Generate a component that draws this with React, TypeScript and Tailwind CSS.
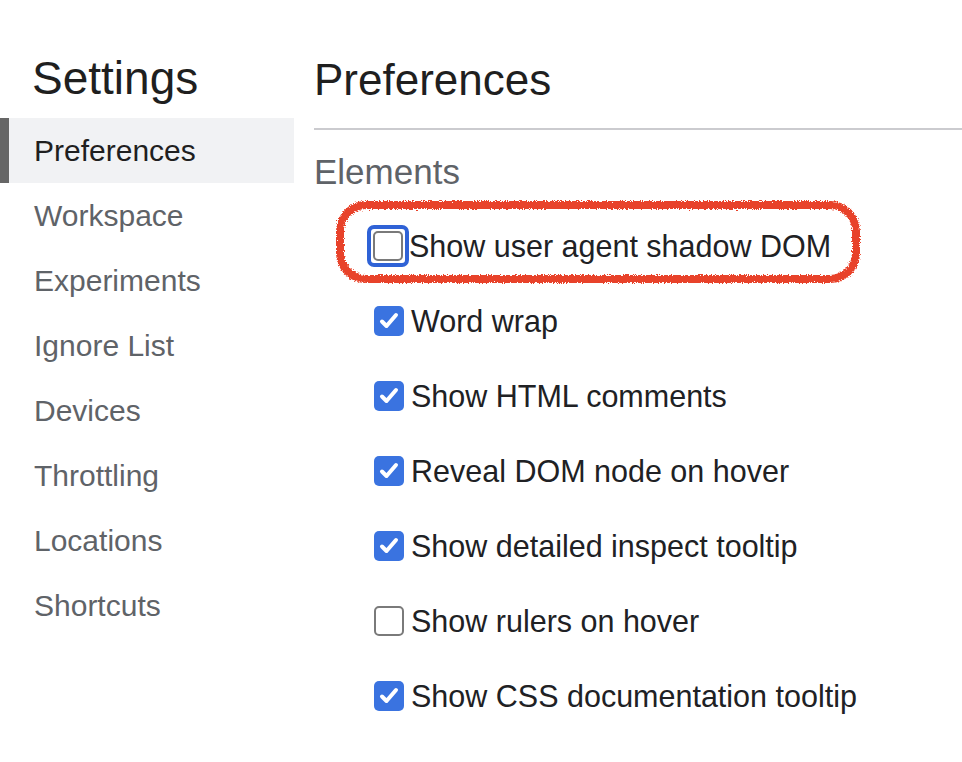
import React from "react";

const sections = [
  "Preferences",
  "Workspace",
  "Experiments",
  "Ignore List",
  "Devices",
  "Throttling",
  "Locations",
  "Shortcuts",
];

const options: { label: string; checked: boolean; focused?: boolean }[] = [
  { label: "Show user agent shadow DOM", checked: false, focused: true },
  { label: "Word wrap", checked: true },
  { label: "Show HTML comments", checked: true },
  { label: "Reveal DOM node on hover", checked: true },
  { label: "Show detailed inspect tooltip", checked: true },
  { label: "Show rulers on hover", checked: false },
  { label: "Show CSS documentation tooltip", checked: true },
];

function Checkbox({ checked, focused }: { checked: boolean; focused?: boolean }) {
  const box = checked ? (
    <span className="flex h-[30px] w-[30px] items-center justify-center rounded-[5px] bg-[#3a73e0]">
      <svg width="22" height="22" viewBox="0 0 22 22" fill="none">
        <path d="M4 11.5l4.5 4.5L18 5" stroke="white" strokeWidth="4" strokeLinecap="round" strokeLinejoin="round" />
      </svg>
    </span>
  ) : (
    <span className="block h-[30px] w-[30px] rounded-[5px] border-[2.5px] border-[#7a7a7a] bg-white" />
  );
  if (!focused) return box;
  return <span className="-m-[7px] rounded-[7px] border-[4px] border-[#2f62d6] p-[2px]">{box}</span>;
}

// hand-drawn red marker ring round the first option
function Scribble() {
  return (
    <svg className="pointer-events-none absolute left-[-38px] top-[-14px]" width="540" height="100" viewBox="0 0 540 100">
      <defs>
        <filter id="rough" x="-5%" y="-20%" width="110%" height="140%">
          <feTurbulence type="fractalNoise" baseFrequency="0.8" numOctaves="2" seed="3" result="n" />
          <feDisplacementMap in="SourceGraphic" in2="n" scale="5" xChannelSelector="R" yChannelSelector="G" />
        </filter>
      </defs>
      <rect x="4" y="11" width="516" height="74" rx="26" fill="none" stroke="#e8432a" strokeWidth="8" filter="url(#rough)" />
    </svg>
  );
}

export default function App() {
  return (
    <div className="flex h-[762px] w-[962px] overflow-hidden bg-white font-['Liberation_Sans',Arial,sans-serif] text-[#202124]">
      <aside className="w-[294px] shrink-0">
        <h1 className="pl-[32px] pt-[52px] pb-[14px] text-[46px] leading-[52px] text-[#1f1f1f]">Settings</h1>
        <nav>
          {sections.map((s, i) => (
            <div
              key={s}
              className={
                i === 0
                  ? "flex h-[65px] items-center border-l-[9px] border-[#666666] bg-[#f1f2f4] pl-[25px] text-[30px] text-[#1f1f1f]"
                  : "flex h-[65px] items-center pl-[34px] text-[30px] text-[#5f6368]"
              }
            >
              {s}
            </div>
          ))}
        </nav>
      </aside>
      <main className="flex-1 pl-[20px]">
        <h2 className="pt-[54px] pb-[22px] text-[44px] leading-[52px] text-[#1f1f1f]">Preferences</h2>
        <div className="h-[2px] bg-[#cbcbcf]" />
        <h3 className="pt-[22px] text-[35px] leading-[40px] text-[#5f6368]">Elements</h3>
        <div className="pt-[16px] pl-[60px]">
          {options.map((o) => (
            <div key={o.label} className="relative flex h-[75px] items-center gap-[7px]">
              <Checkbox checked={o.checked} focused={o.focused} />
              <span className="text-[30.5px] leading-[36px]">{o.label}</span>
              {o.focused && <Scribble />}
            </div>
          ))}
        </div>
      </main>
    </div>
  );
}
